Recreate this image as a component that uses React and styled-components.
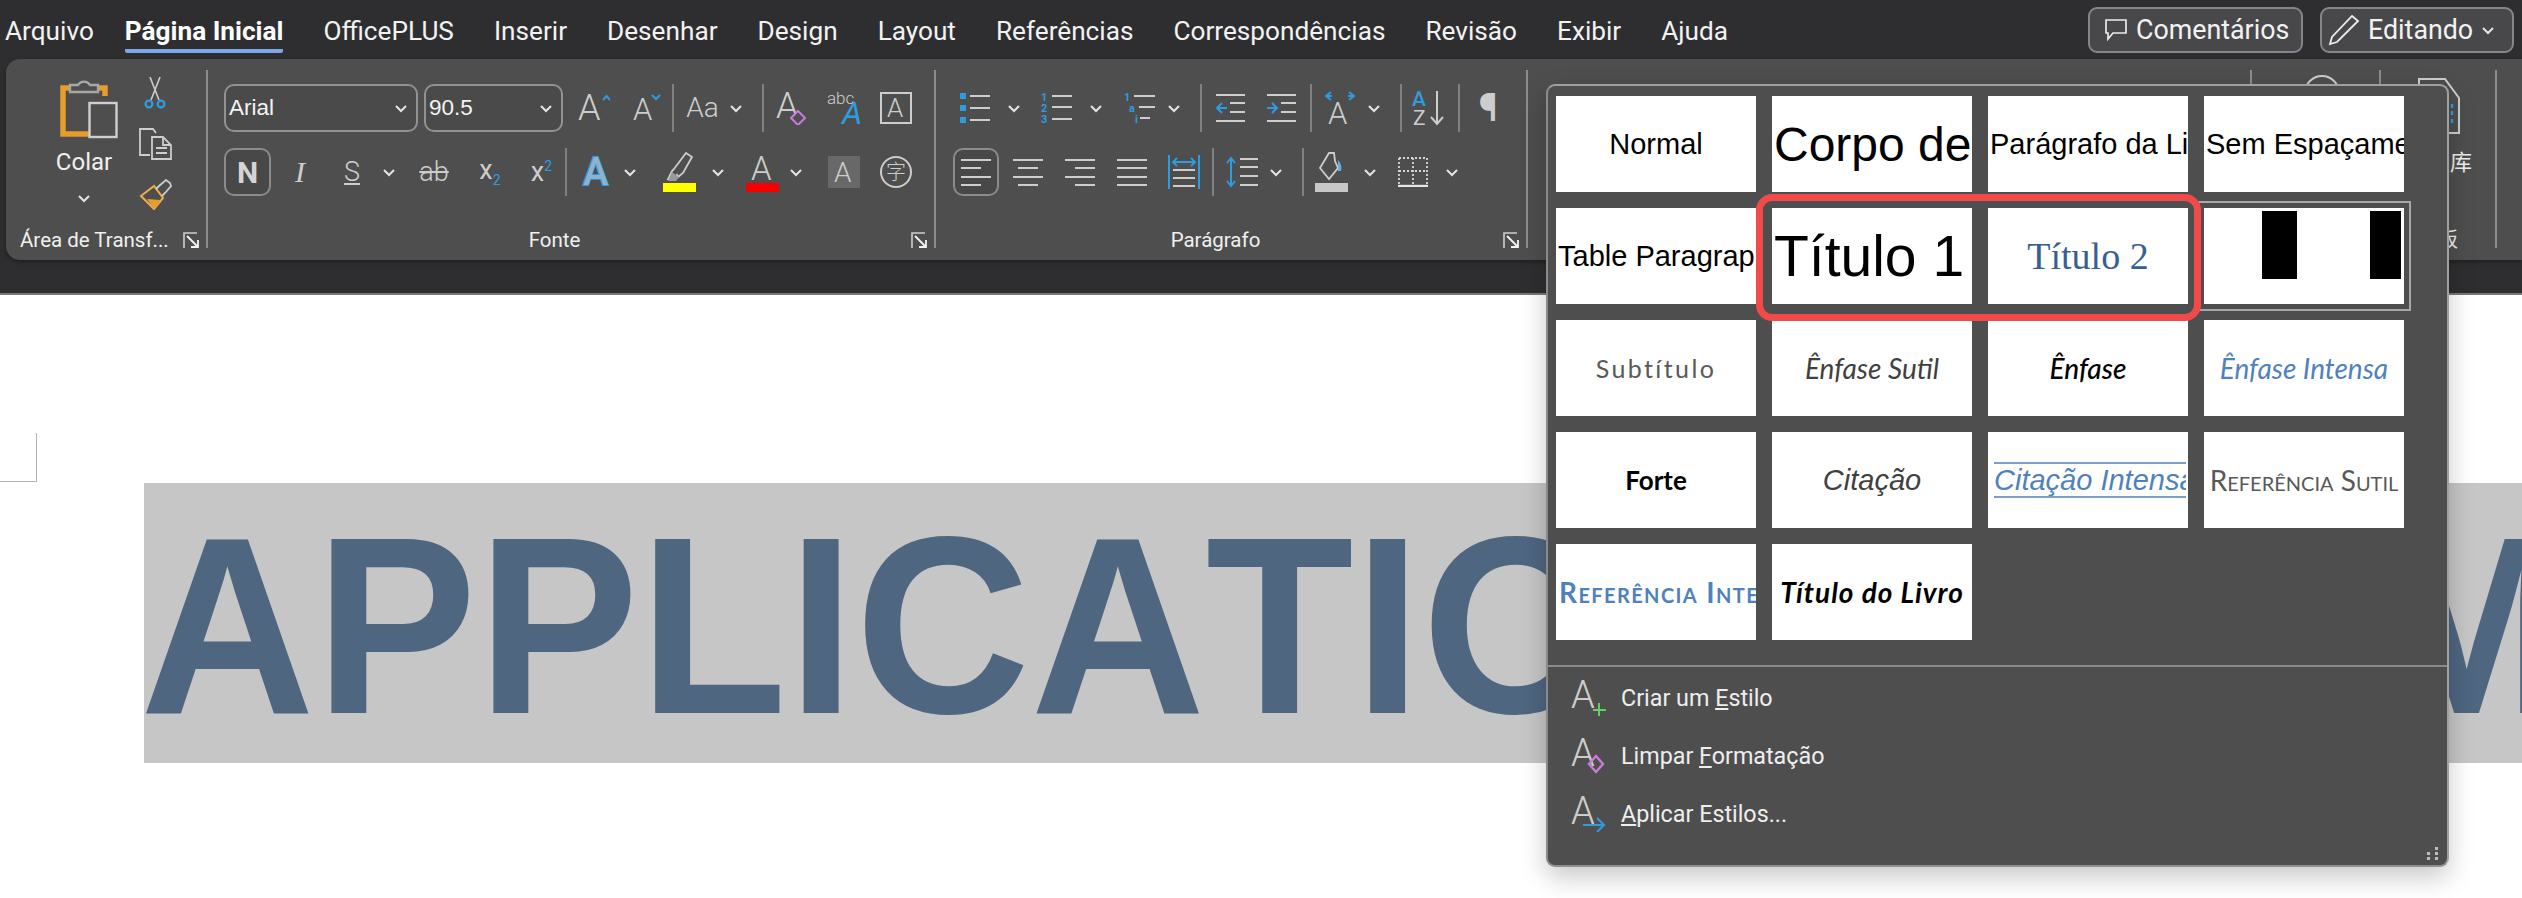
import React from "react";
import styled, { createGlobalStyle } from "styled-components";

const G = "#cdcdcd";
const BLUE = "#2f9be0";
const UI = `Roboto, "Noto Sans CJK SC", sans-serif`;

const Global = createGlobalStyle`
  html, body { margin: 0; padding: 0; background: #fff; }
  #root { width: 2522px; height: 898px; overflow: hidden; }
  svg text { font-family: Roboto, "Noto Sans CJK SC", sans-serif; }
`;

const Page = styled.div`
  position: relative; width: 2522px; height: 898px; overflow: hidden;
  background: #fff; font-family: ${UI}; color: #fff;
`;
const Chrome = styled.div`
  background: #2e2e30; height: 293px; border-bottom: 2px solid #77787a;
  display: flex; flex-direction: column;
`;
const TitleBar = styled.div`
  height: 59px; display: flex; align-items: flex-start; padding-left: 5px; flex: none;
`;
const Tab = styled.div`
  height: 53px; line-height: 63px; font-size: 26.2px; margin-right: ${p => p.$mr ?? 40}px;
  white-space: nowrap; color: #f2f2f2; box-sizing: border-box;
  font-weight: ${p => (p.$active ? 700 : 400)};
  border-bottom: ${p => (p.$active ? "4px solid #7ea6ea" : "none")};
  ${p => p.$active && "color:#fff; border-radius: 0 0 2px 2px;"}
`;
const TitleActions = styled.div`
  position: absolute; right: 8px; top: 7px; display: flex; gap: 17px;
`;
const TitleButton = styled.div`
  height: 46px; box-sizing: border-box; width: ${p => p.$w}px; display: flex; align-items: center;
  border: 2px solid #85868a; border-radius: 9px; background: #48484a;
  font-size: 26.8px; padding-left: ${p => p.$pl}px; gap: ${p => p.$gap}px; color: #f2f2f2;
`;
const Ribbon = styled.div`
  margin-left: 6px; height: 201px; flex: none; background: #4e4e4e; border-radius: 14px 0 0 14px;
  display: flex; padding-top: 11px; box-sizing: border-box; box-shadow: 0 2px 4px rgba(0,0,0,.35);
`;
const Group = styled.div`
  width: ${p => p.$w}px; height: 178px; flex: none; box-sizing: border-box;
  border-right: 2px solid #8d8d8d; display: flex; flex-direction: column;
`;
const GroupBody = styled.div`
  flex: 1; padding: 14px 0 0 ${p => p.$pl ?? 16}px; display: flex; flex-direction: column; gap: 16px;
`;
const Row = styled.div`display: flex; height: 48px; align-items: center;`;
const Tool = styled.span`
  display: inline-flex; align-items: center; justify-content: center; flex: none; height: 100%;
  width: ${p => p.$w}px; margin-left: ${p => p.$ml}px; color: ${G};
`;
const Divider = styled.span`display: block; width: 2px; height: 100%; background: #808080;`;
const Combo = styled.div`
  width: 100%; height: 100%; box-sizing: border-box; border: 2px solid #929292; border-radius: 10px;
  background: #4a4a4a; display: flex; align-items: center; justify-content: space-between;
  padding: 0 8px 0 3px; font: 400 22.5px "Liberation Sans", sans-serif; color: #f4f4f4;
`;
const Pressed = styled.div`
  width: 100%; height: 100%; box-sizing: border-box; border: 2px solid #8b8b8b; border-radius: 10px;
  background: #484848; display: flex; align-items: center; justify-content: center;
  font: ${p => p.$font || "700 30px Roboto, sans-serif"}; color: #d4d4d4;
`;
const Glyph = styled.span`
  font: ${p => p.$font || "300 28px Roboto, sans-serif"}; color: ${p => p.$color || G}; line-height: 1;
  text-decoration: ${p => p.$deco || "none"}; white-space: nowrap;
`;
const SubMark = styled.span`font-size: 14px; color: ${BLUE}; vertical-align: ${p => p.$dir};`;
const LabelRow = styled.div`
  display: flex; align-items: center; height: 24px; margin-bottom: -4px; padding: 0 6px 0 ${p => p.$pl || 0}px;
`;
const GroupLabel = styled.div`
  font-size: 20.5px; color: #f0f0f0; white-space: nowrap;
  ${p => p.$center && `flex: 1; text-align: center; padding-right: ${p.$pr}px;`}
  ${p => p.$fixed && "margin-right: auto;"}
`;
const ClipBody = styled.div`display: flex; flex: 1; padding-top: 6px;`;
const PasteCol = styled.div`
  width: 68px; margin-left: 44px; display: flex; flex-direction: column; align-items: center;
`;
const PasteText = styled.div`font-size: 24px; height: 28px; line-height: 28px; margin-top: 8px; color: #f0f0f0;`;
const PasteChevron = styled.div`margin-top: 12px;`;
const MiniCol = styled.div`
  width: 40px; margin-left: 17px; padding-top: 1px; display: flex; flex-direction: column;
  align-items: center; gap: 19px;
`;
const SideBody = styled.div`flex: 1; padding: ${p => p.$pt}px 0 0 ${p => p.$pl}px;`;
const CutLabel = styled.div`font-size: 22px; line-height: 28px; color: #eee; margin: 11px 0 0 -12px; white-space: nowrap;`;
const HiddenLabel = styled.div`font-size: 20px; line-height: 24px; color: #eee; margin: 0 0 -4px 37px; white-space: nowrap;`;

const Doc = styled.div`display: flex; flex-direction: column;`;
const MarginMark = styled.div`
  width: 37px; height: 49px; margin-top: 138px; box-sizing: border-box;
  border-right: 1px solid #b4b4b4; border-bottom: 1px solid #b4b4b4;
`;
const Band = styled.div`
  margin: 1px 0 0 144px; height: 280px; background: #c6c6c6; overflow: hidden; white-space: nowrap;
  font: 700 242px/292px "Liberation Sans", Arial, sans-serif; color: #4f6680; font-kerning: none;
  letter-spacing: 0.5px;
`;
const BandText = styled.span`
  display: inline-block; margin-left: -4px; transform: scaleY(1.04); transform-origin: 0 79%;
`;

const Popover = styled.div`
  position: absolute; left: 1546px; top: 84px; width: 903px; height: 783px; box-sizing: border-box;
  background: #4e4e4e; border: 2px solid #a0a0a0; border-radius: 9px; border-left-color: #8a8a8a;
  border-bottom-color: #8f8f8f; box-shadow: 0 10px 26px rgba(0,0,0,.22);
`;
const StyleGrid = styled.div`
  display: grid; grid-template-columns: repeat(4, 200px); grid-auto-rows: 96px; gap: 16px;
  padding: 10px 0 0 8px;
`;
const StyleCell = styled.div`
  background: #fff; overflow: hidden; display: flex; align-items: center;
  justify-content: ${p => (p.$left ? "flex-start" : "center")}; white-space: nowrap;
  padding-left: ${p => (p.$left ? p.$left : 0)}px; box-sizing: border-box; color: ${p => p.$color || "#000"};
  font-family: ${p => p.$family || '"Liberation Sans", Arial, sans-serif'}; font-size: ${p => p.$size || 29}px;
  font-weight: ${p => p.$weight || 400}; font-style: ${p => (p.$italic ? "italic" : "normal")};
  letter-spacing: ${p => p.$ls || 0}px; font-variant: ${p => (p.$caps ? "small-caps" : "normal")};
`;
const TofuCell = styled.div`
  background: #fff; display: flex; align-items: flex-start; padding: 3px 0 0 58px; box-sizing: border-box;
  outline: 2px solid #a8a8a8; outline-offset: 5px;
`;
const Tofu = styled.span`
  display: block; background: #000; height: 68px; width: ${p => p.$w}px; margin-right: ${p => p.$mr || 0}px;
`;
const RuledText = styled.span`
  display: block; width: 192px; margin-left: 4px; border-top: 2px solid #7ba0c8; border-bottom: 2px solid #7ba0c8;
  line-height: 32px; overflow: hidden; padding: 0;
`;
const Highlight = styled.div`
  position: absolute; left: 208px; top: 108px; width: 445px; height: 127px; box-sizing: border-box;
  border: 7px solid #f24a4a; border-radius: 16px;
`;
const MenuDivider = styled.div`height: 2px; background: #8a8a8a; margin-top: 25px;`;
const MenuItems = styled.div`padding-top: 2px;`;
const MenuItem = styled.div`
  height: 58px; display: flex; align-items: center; padding-left: 23px; gap: 15px;
  font-size: 23.3px; color: #eeeeee;
`;
const Grip = styled.svg`position: absolute; right: 8px; bottom: 5px;`;

const Chevron = ({ c = "#e4e4e4" }) => (
  <svg width="14" height="9" viewBox="0 0 14 9" fill="none"><path d="M2 2l5 5 5-5" stroke={c} strokeWidth="2" /></svg>
);

const Launcher = () => (
  <svg width="17" height="17" viewBox="0 0 17 17" fill="none">
    <path d="M1 16V1h13" stroke="#cfcfcf" strokeWidth="1.6" />
    <path d="M4 4l11 11M15 8v7H8" stroke="#f2f2f2" strokeWidth="1.8" />
  </svg>
);

const Clipboard = () => (
  <svg width="68" height="64" viewBox="0 0 68 64" fill="none">
    <path d="M48 12h7v8M20 12h-7v46h30" stroke="#e69d2c" strokeWidth="5.5" />
    <path d="M20 16V9h8a7 7 0 0 1 12 0h8v7z" fill="#4e4e4e" stroke="#a8a8a8" strokeWidth="2.4" />
    <rect x="39.5" y="27" width="27" height="34" fill="#4e4e4e" stroke="#cfcfcf" strokeWidth="2.4" />
  </svg>
);
const Scissors = () => (
  <svg width="22" height="32" viewBox="0 0 22 32" fill="none">
    <path d="M16 0L7 23M6 0l9 23" stroke={G} strokeWidth="1.6" />
    <circle cx="5" cy="27" r="3.4" stroke={BLUE} strokeWidth="2.2" />
    <circle cx="17" cy="27" r="3.4" stroke={BLUE} strokeWidth="2.2" />
  </svg>
);
const CopyIcon = () => (
  <svg width="33" height="32" viewBox="0 0 33 32" fill="none">
    <path d="M11 27H1V1h13l3 4" stroke={G} strokeWidth="1.8" />
    <path d="M13 9h11l8 8v14H13z" fill="#4e4e4e" stroke={G} strokeWidth="1.8" />
    <path d="M24 9v8h8M17 20h11M17 25h11" stroke={G} strokeWidth="1.8" />
  </svg>
);
const Painter = () => (
  <svg width="33" height="31" viewBox="0 0 33 31" fill="none">
    <path d="M2 17L15 7l9 12-9 11z" stroke="#e9ad4a" strokeWidth="2" />
    <path d="M8 20l14 1-7 9z" fill="#e69d2c" />
    <path d="M17 10l3-3 7-6 4 3 1 3-6 7-3 3" stroke={G} strokeWidth="1.8" />
  </svg>
);

const GrowA = ({ down }) => (
  <svg width={down ? 28 : 32} height="34" viewBox={`0 0 ${down ? 28 : 32} 34`} fill="none">
    <text x="0" y="29" fontSize={down ? 31 : 36} fontWeight="300" fill={G}>A</text>
    {down
      ? <path d="M19 4l4 4 4-4" stroke={BLUE} strokeWidth="2" />
      : <path d="M25 9l3.5-4 3.5 4" stroke={BLUE} strokeWidth="2" />}
  </svg>
);
const ClearA = () => (
  <svg width="32" height="34" viewBox="0 0 32 34" fill="none">
    <text x="0" y="27" fontSize="36" fontWeight="300" fill={G}>A</text>
    <path d="M22 20l7 7-7 7-7-7z" fill="#4e4e4e" stroke="#c77dd8" strokeWidth="2" />
  </svg>
);
const AbcA = () => (
  <svg width="34" height="36" viewBox="0 0 34 36" fill="none">
    <text x="0" y="14" fontSize="17" fontWeight="300" fill={G}>abc</text>
    <text x="15" y="34" fontSize="32" fontStyle="italic" fontWeight="400" fill={BLUE}>A</text>
  </svg>
);
const BoxA = () => (
  <svg width="32" height="32" viewBox="0 0 32 32" fill="none">
    <rect x="1" y="1" width="30" height="30" stroke={G} strokeWidth="2" />
    <text x="7" y="25" fontSize="26" fontWeight="300" fill={G}>A</text>
  </svg>
);
const TextEffect = () => (
  <svg width="30" height="34" viewBox="0 0 30 34" fill="none">
    <text x="1" y="30" fontSize="38" fontWeight="500" fill="#8fb2cc" stroke={BLUE} strokeWidth="2" paintOrder="stroke">A</text>
  </svg>
);
const Highlighter = () => (
  <svg width="33" height="40" viewBox="0 0 33 40" fill="none">
    <path d="M23 1l6 4-9 16-5 4-1-2-3 4H5l4-8 2-2z" stroke={G} strokeWidth="1.8" />
    <path d="M9 20l7 5-3 4H5z" fill="#9a9a9a" />
    <rect y="31" width="33" height="9" fill="#ffff00" />
  </svg>
);
const ColorA = () => (
  <svg width="33" height="40" viewBox="0 0 33 40" fill="none">
    <text x="5" y="28" fontSize="33" fontWeight="300" fill={G}>A</text>
    <rect y="31" width="33" height="9" fill="#f40000" />
  </svg>
);
const ShadeA = () => (
  <svg width="32" height="32" viewBox="0 0 32 32">
    <rect width="32" height="32" fill="#686868" />
    <text x="6" y="26" fontSize="28" fontWeight="300" fill={G}>A</text>
  </svg>
);
const Phonetic = () => (
  <svg width="32" height="32" viewBox="0 0 32 32" fill="none">
    <circle cx="16" cy="16" r="15" stroke={G} strokeWidth="2" />
    <text x="6" y="23" fontSize="20" fontWeight="300" fill={G}>字</text>
  </svg>
);
const Lines = ({ ys, x0, x1, w = 32, h = 30 }) => (
  <svg width={w} height={h} viewBox={`0 0 ${w} ${h}`} fill="none">
    {ys.map((y, i) => <path key={y} d={`M${x0[i]} ${y}H${x1[i]}`} stroke={G} strokeWidth="2" />)}
  </svg>
);
const Bullets = () => (
  <svg width="30" height="30" viewBox="0 0 30 30" fill="none">
    {[3, 15, 27].map(y => (
      <g key={y}><rect y={y - 3} width="6" height="6" fill={BLUE} /><path d={`M10 ${y}H30`} stroke={G} strokeWidth="2" /></g>
    ))}
  </svg>
);
const Numbers = () => (
  <svg width="31" height="32" viewBox="0 0 31 32" fill="none">
    {[["1", 9, 4], ["2", 20, 15], ["3", 31, 27]].map(([t, y, ly]) => (
      <g key={t}><text x="0" y={y} fontSize="11" fontWeight="700" fill={BLUE}>{t}</text><path d={`M11 ${ly}H31`} stroke={G} strokeWidth="2" /></g>
    ))}
  </svg>
);
const MultiLevel = () => (
  <svg width="31" height="32" viewBox="0 0 31 32" fill="none">
    <text x="0" y="9" fontSize="11" fontWeight="700" fill={BLUE}>1</text>
    <path d="M10 4H31" stroke={G} strokeWidth="2" />
    <text x="5" y="20" fontSize="11" fontWeight="700" fill={BLUE}>a</text>
    <path d="M15 15H31" stroke={G} strokeWidth="2" />
    <text x="11" y="31" fontSize="11" fontWeight="700" fill={BLUE}>i</text>
    <path d="M16 26H26" stroke={G} strokeWidth="2" />
  </svg>
);
const Indent = ({ out }) => (
  <svg width="29" height="30" viewBox="0 0 29 30" fill="none">
    <path d="M0 2H29M0 28H29M14 10H29M14 19H29" stroke={G} strokeWidth="2" />
    {out
      ? <path d="M11 15H1M6 10l-5 5 5 5" stroke={BLUE} strokeWidth="2" />
      : <path d="M0 15H10M5 10l5 5-5 5" stroke={BLUE} strokeWidth="2" />}
  </svg>
);
const DirectionA = () => (
  <svg width="34" height="34" viewBox="0 0 34 34" fill="none">
    <text x="5" y="33" fontSize="31" fontWeight="300" fill={G}>A</text>
    <path d="M8 1L3 5l5 4M3 5h6M26 1l5 4-5 4M31 5h-6" stroke={BLUE} strokeWidth="2" />
  </svg>
);
const Sort = () => (
  <svg width="35" height="36" viewBox="0 0 35 36" fill="none">
    <text x="0" y="16" fontSize="21" fontWeight="500" fill={BLUE}>A</text>
    <text x="1" y="35" fontSize="21" fontWeight="400" fill={G}>Z</text>
    <path d="M25 1v33M19 27l6 7 6-7" stroke={G} strokeWidth="2" />
  </svg>
);
const Distributed = () => (
  <svg width="32" height="34" viewBox="0 0 32 34" fill="none">
    <path d="M1 0v34M31 0v34" stroke={BLUE} strokeWidth="2" />
    <path d="M5 7H27M9 3L5 7l4 4M23 3l4 4-4 4" stroke={BLUE} strokeWidth="1.8" />
    <path d="M5 15H27M5 23H27M5 31H27" stroke={G} strokeWidth="2" />
  </svg>
);
const LineSpacing = () => (
  <svg width="32" height="32" viewBox="0 0 32 32" fill="none">
    <path d="M5 2v28M1 7l4-5 4 5M1 25l4 5 4-5" stroke={BLUE} strokeWidth="2" />
    <path d="M14 3H32M14 11H32M14 20H32M14 29H32" stroke={G} strokeWidth="2" />
  </svg>
);
const Shading = () => (
  <svg width="33" height="40" viewBox="0 0 33 40" fill="none">
    <path d="M5 16L14 1h5l1 8 3 7-9 11z" stroke={G} strokeWidth="1.8" />
    <path d="M23 8c3 3 4 7 3 11h-3z" fill="#6aaee0" />
    <rect y="31" width="33" height="9" fill="#c8c8c8" />
  </svg>
);
const Borders = () => (
  <svg width="30" height="30" viewBox="0 0 30 30" fill="none">
    <path d="M1 1H29M1 14H29M1 1V29M29 1V29M15 1V27" stroke="#d8d8d8" strokeWidth="1.8" strokeDasharray="2 2" />
    <path d="M0 29H30" stroke="#e6e6e6" strokeWidth="2.4" />
  </svg>
);
const CommentIcon = () => (
  <svg width="22" height="22" viewBox="0 0 22 22" fill="none">
    <path d="M1 1H21V14H8L3 20V14H1z" stroke="#ececec" strokeWidth="1.7" />
  </svg>
);
const PenIcon = () => (
  <svg width="32" height="32" viewBox="0 0 32 32" fill="none">
    <path d="M24 2l6 5L9 28l-7 2 2-7z" stroke="#ececec" strokeWidth="1.8" />
  </svg>
);
const MenuIcon = ({ children }) => (
  <svg width="35" height="36" viewBox="0 0 35 36" fill="none">
    <text x="0" y="28" fontSize="38" fontWeight="300" fill={G}>A</text>
    {children}
  </svg>
);

const tools = (start, items) => {
  let cur = start;
  return items.map(([x0, x1, node], i) => {
    const el = <Tool key={i} $w={x1 - x0} $ml={x0 - cur}>{node}</Tool>;
    cur = x1;
    return el;
  });
};
const chev = (cx) => [cx - 7, cx + 7, <Chevron />];
const sep = (x) => [x - 1, x + 1, <Divider />];

const fontTop = [
  [224, 418, <Combo>Arial<Chevron /></Combo>],
  [424, 563, <Combo>90.5<Chevron /></Combo>],
  [578, 610, <GrowA />],
  [633, 661, <GrowA down />],
  sep(673),
  [686, 719, <Glyph>Aa</Glyph>],
  chev(736),
  sep(763),
  [776, 808, <ClearA />],
  [827, 861, <AbcA />],
  [880, 912, <BoxA />],
];
const fontBottom = [
  [224, 271, <Pressed>N</Pressed>],
  [290, 310, <Glyph $font='italic 400 30px "Liberation Serif", serif'>I</Glyph>],
  [342, 362, <Glyph $deco="underline" $font="300 27px Roboto, sans-serif">S</Glyph>],
  chev(389),
  [417, 451, <Glyph $deco="line-through" $font="300 27px Roboto, sans-serif">ab</Glyph>],
  [479, 501, <Glyph $font="400 27px Roboto, sans-serif">x<SubMark $dir="sub">2</SubMark></Glyph>],
  [531, 552, <Glyph $font="400 27px Roboto, sans-serif">x<SubMark $dir="super">2</SubMark></Glyph>],
  sep(566),
  [582, 612, <TextEffect />],
  chev(630),
  [663, 696, <Highlighter />],
  chev(718),
  [746, 779, <ColorA />],
  chev(796),
  [828, 860, <ShadeA />],
  [880, 912, <Phonetic />],
];
const paraTop = [
  [960, 990, <Bullets />],
  chev(1014),
  [1041, 1072, <Numbers />],
  chev(1096),
  [1124, 1155, <MultiLevel />],
  chev(1174),
  sep(1201),
  [1216, 1245, <Indent out />],
  [1267, 1296, <Indent />],
  sep(1311),
  [1323, 1357, <DirectionA />],
  chev(1374),
  sep(1401),
  [1412, 1447, <Sort />],
  sep(1459),
  [1474, 1502, <Glyph $font="700 38px Roboto, sans-serif">¶</Glyph>],
];
const A_Y = [1, 9, 18, 26];
const paraBottom = [
  [953, 999, <Pressed><Lines w={30} h={27} ys={A_Y} x0={[0, 0, 0, 0]} x1={[30, 20, 30, 20]} /></Pressed>],
  [1013, 1043, <Lines w={30} h={27} ys={A_Y} x0={[0, 5, 0, 5]} x1={[30, 25, 30, 25]} />],
  [1065, 1095, <Lines w={30} h={27} ys={A_Y} x0={[0, 10, 0, 10]} x1={[30, 30, 30, 30]} />],
  [1117, 1147, <Lines w={30} h={27} ys={A_Y} x0={[0, 0, 0, 0]} x1={[30, 30, 30, 30]} />],
  [1168, 1200, <Distributed />],
  sep(1213),
  [1226, 1258, <LineSpacing />],
  chev(1276),
  sep(1303),
  [1315, 1348, <Shading />],
  chev(1370),
  [1398, 1428, <Borders />],
  chev(1452),
];

const tabNames = ["OfficePLUS", "Inserir", "Desenhar", "Design", "Layout", "Referências", "Correspondências", "Revisão", "Exibir", "Ajuda"];

export default function App() {
  return (
    <Page>
      <Global />
      <Chrome>
        <TitleBar>
          <Tab $mr={31}>Arquivo</Tab>
          <Tab $active>Página Inicial</Tab>
          {tabNames.map(t => <Tab key={t}>{t}</Tab>)}
          <TitleActions>
            <TitleButton $w={215} $pl={15} $gap={9}><CommentIcon />Comentários</TitleButton>
            <TitleButton $w={194} $pl={6} $gap={8}><PenIcon />Editando<Chevron /></TitleButton>
          </TitleActions>
        </TitleBar>
        <Ribbon>
          <Group $w={202}>
            <ClipBody>
              <PasteCol>
                <Clipboard />
                <PasteText>Colar</PasteText>
                <PasteChevron><Chevron /></PasteChevron>
              </PasteCol>
              <MiniCol>
                <Scissors />
                <CopyIcon />
                <Painter />
              </MiniCol>
            </ClipBody>
            <LabelRow $pl={14}>
              <GroupLabel $fixed>Área de Transf...</GroupLabel>
              <Launcher />
            </LabelRow>
          </Group>
          <Group $w={728}>
            <GroupBody $pl={0}>
              <Row>{tools(208, fontTop)}</Row>
              <Row>{tools(208, fontBottom)}</Row>
            </GroupBody>
            <LabelRow>
              <GroupLabel $center $pr={10}>Fonte</GroupLabel>
              <Launcher />
            </LabelRow>
          </Group>
          <Group $w={592}>
            <GroupBody $pl={0}>
              <Row>{tools(936, paraTop)}</Row>
              <Row>{tools(936, paraBottom)}</Row>
            </GroupBody>
            <LabelRow>
              <GroupLabel $center $pr={8}>Parágrafo</GroupLabel>
              <Launcher />
            </LabelRow>
          </Group>
          <Group $w={724} />
          <Group $w={129}>
            <SideBody $pt={5} $pl={52}>
              <svg width="36" height="36" viewBox="0 0 36 36" fill="none">
                <circle cx="18" cy="18" r="17" stroke={G} strokeWidth="2" />
              </svg>
            </SideBody>
          </Group>
          <Group $w={116}>
            <SideBody $pt={8} $pl={37}>
              <svg width="42" height="56" viewBox="0 0 42 56" fill="none">
                <path d="M1 1H27L41 20V55H1z" stroke={G} strokeWidth="2" />
                <path d="M34 26v4M34 33v4M34 41v4" stroke={BLUE} strokeWidth="2.4" />
              </svg>
              <CutLabel>模板库</CutLabel>
            </SideBody>
            <HiddenLabel>模板</HiddenLabel>
          </Group>
        </Ribbon>
      </Chrome>
      <Doc>
        <MarginMark />
        <Band><BandText>APPLICATION FORM</BandText></Band>
      </Doc>
      <Popover>
        <StyleGrid>
          <StyleCell>Normal</StyleCell>
          <StyleCell $left={2} $size={48}>Corpo de</StyleCell>
          <StyleCell $left={2}>Parágrafo da Lista</StyleCell>
          <StyleCell $left={2}>Sem Espaçamento</StyleCell>
          <StyleCell $left={2}>Table Paragraph</StyleCell>
          <StyleCell $left={2} $size={57}>Título 1</StyleCell>
          <StyleCell $family='"Liberation Serif", serif' $size={38}>
            <Glyph $color="#366091" $font='400 38px "Liberation Serif", serif'>Título 2</Glyph>
          </StyleCell>
          <TofuCell><Tofu $w={35} $mr={73} /><Tofu $w={31} /></TofuCell>
          <StyleCell $family="Lato, sans-serif" $size={25} $color="#595959" $ls={2.4}>Subtítulo</StyleCell>
          <StyleCell $family="Lato, sans-serif" $size={28} $italic $color="#404040">Ênfase Sutil</StyleCell>
          <StyleCell $family="Lato, sans-serif" $size={28} $italic $weight={500}>Ênfase</StyleCell>
          <StyleCell $family="Lato, sans-serif" $size={28} $italic $color="#4f81bd">Ênfase Intensa</StyleCell>
          <StyleCell $family="Lato, sans-serif" $size={26} $weight={700}>Forte</StyleCell>
          <StyleCell $italic $color="#404040">Citação</StyleCell>
          <StyleCell $italic $color="#4f81bd" $left={0}><RuledText>Citação Intensa</RuledText></StyleCell>
          <StyleCell $family="Lato, sans-serif" $size={28} $caps $color="#595959">Referência Sutil</StyleCell>
          <StyleCell $family="Lato, sans-serif" $size={28} $caps $weight={700} $color="#4f81bd" $left={3} $ls={1.4}>Referência Intensa</StyleCell>
          <StyleCell $family="Lato, sans-serif" $size={28} $italic $weight={700} $ls={1}>Título do Livro</StyleCell>
        </StyleGrid>
        <MenuDivider />
        <MenuItems>
          <MenuItem>
            <MenuIcon><path d="M28 23v13M22 30h13" stroke="#5fd068" strokeWidth="2" /></MenuIcon>
            <span>Criar um <u>E</u>stilo</span>
          </MenuItem>
          <MenuItem>
            <MenuIcon><path d="M25 18l7 8-7 8-7-8z" stroke="#c77dd8" strokeWidth="2.4" /></MenuIcon>
            <span>Limpar <u>F</u>ormatação</span>
          </MenuItem>
          <MenuItem>
            <MenuIcon><path d="M12 29H33M26 22l7 7-7 7" stroke={BLUE} strokeWidth="2" /></MenuIcon>
            <span><u>A</u>plicar Estilos...</span>
          </MenuItem>
        </MenuItems>
        <Grip width="12" height="13" viewBox="0 0 12 13">
          <path d="M8 0h3v3H8zM8 5h3v3H8zM8 10h3v3H8zM0 10h3v3H0zM0 5h3v3H0z" fill="#bdbdbd" />
        </Grip>
        <Highlight />
      </Popover>
    </Page>
  );
}
